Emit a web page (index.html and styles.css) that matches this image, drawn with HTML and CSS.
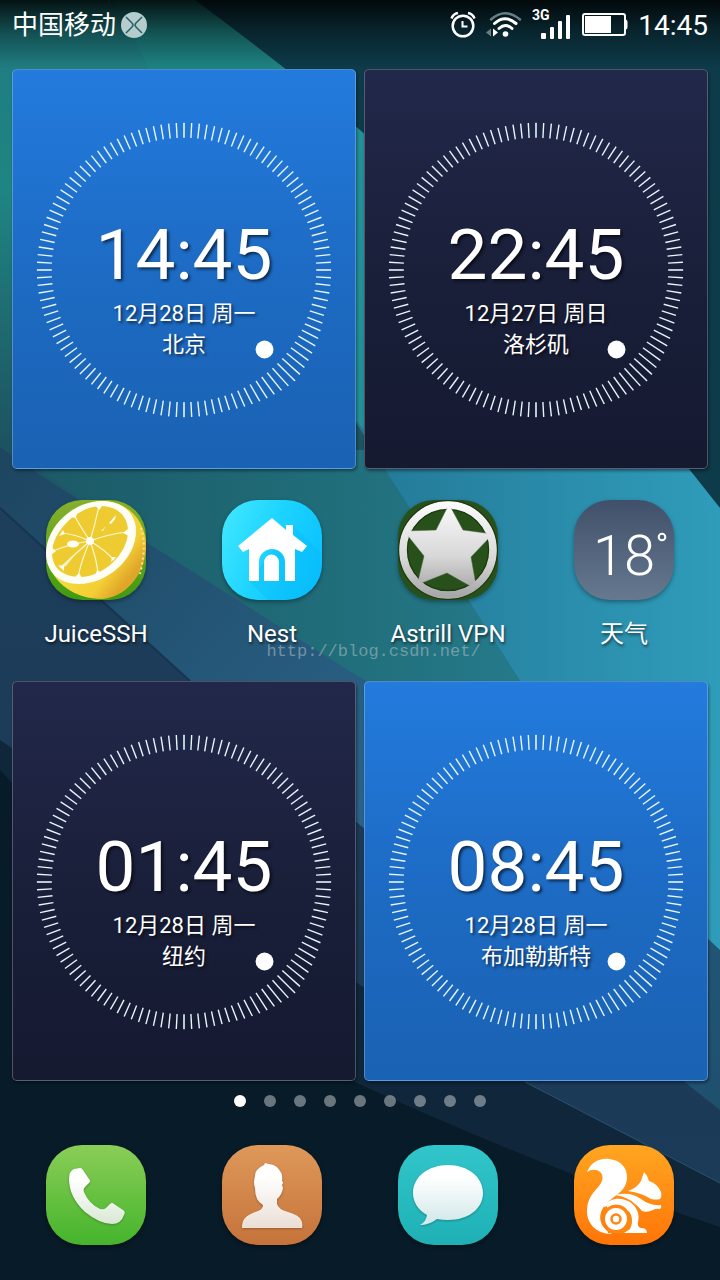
FILE: index.html
```html
<!DOCTYPE html>
<html lang="zh-CN">
<head>
    <meta charset="UTF-8">
    <meta name="viewport" content="width=device-width, initial-scale=1.0">
    <title>Home</title>
    <link rel="stylesheet" href="styles.css">
</head>
<body>
    <svg class="wallpaper" viewBox="0 0 720 1280" preserveAspectRatio="none" aria-hidden="true">
        <defs>
            <linearGradient id="wBase" x1="0" y1="0" x2="0" y2="1">
                <stop offset="0" stop-color="#1f7a80"/>
                <stop offset="0.15" stop-color="#1f8582"/>
                <stop offset="0.35" stop-color="#1d5260"/>
                <stop offset="0.45" stop-color="#22667a"/>
                <stop offset="1" stop-color="#22667a"/>
            </linearGradient>
            <linearGradient id="wMid" x1="0" y1="0" x2="1" y2="0">
                <stop offset="0" stop-color="#1c5866"/>
                <stop offset="0.5" stop-color="#1f6975"/>
                <stop offset="1" stop-color="#257a8a"/>
            </linearGradient>
            <linearGradient id="wBright" x1="0" y1="0" x2="1" y2="0">
                <stop offset="0" stop-color="#217391"/>
                <stop offset="1" stop-color="#2f9cba"/>
            </linearGradient>
            <linearGradient id="wBand" x1="0" y1="0" x2="1" y2="1">
                <stop offset="0" stop-color="#1d4560"/>
                <stop offset="0.5" stop-color="#2b658b"/>
                <stop offset="1" stop-color="#1b4a66"/>
            </linearGradient>
            <linearGradient id="wNavy" x1="0" y1="0" x2="0" y2="1">
                <stop offset="0" stop-color="#1d3f5c"/>
                <stop offset="0.4" stop-color="#1c3a57"/>
                <stop offset="1" stop-color="#1c3b58"/>
            </linearGradient>
            <linearGradient id="wShade" x1="0" y1="0" x2="0" y2="1">
                <stop offset="0" stop-color="#000" stop-opacity="0.85"/>
                <stop offset="0.5" stop-color="#000" stop-opacity="0.35"/>
                <stop offset="1" stop-color="#000" stop-opacity="0"/>
            </linearGradient>
        </defs>
        <rect width="720" height="1280" fill="url(#wBase)"/>
        <path d="M112 0Q135 40 150 70L420 520L720 600V0Z" fill="#1d8c88" opacity="0.45"/>
        <path d="M300 330L385 470L520 681L720 960V0H330Z" fill="url(#wBright)"/>
        <path d="M12 450H372L385 470L520 681V720H400Z" fill="url(#wMid)"/>
        <path d="M330 100L364 132V430L340 400Z" fill="#238f97"/>
        <path d="M195 0Q300 78 360 130Q550 290 720 508V0Z" fill="#0d3b49"/>
        <path d="M0 447L45 478L340 665L560 800L720 950V1280H0Z" fill="url(#wBand)"/>
        <path d="M0 508L190 681L360 825L720 1110V1280H0Z" fill="url(#wNavy)"/>
        <path d="M0 508L190 681" stroke="#16354e" stroke-width="2"/>
        <path d="M0 740L360 985L525 1082L720 1183V1280H0Z" fill="#10273b"/>
        <path d="M525 1082L720 1183" stroke="#2c506e" stroke-width="1"/>
        <path d="M0 770L240 1030L370 1089Q560 1175 720 1227V1280H0Z" fill="#081b28"/>
        <rect width="720" height="68" fill="url(#wShade)"/>
    </svg>

    <header class="status-bar">
        <div class="carrier">
            <span>中国移动</span>
            <svg width="26" height="26" viewBox="0 0 26 26" aria-hidden="true">
                <circle cx="13" cy="13" r="13" fill="#b5cdcd"/>
                <path d="M5 5L11 11Q13 13 11 15L5 21M21 5L15 11Q13 13 15 15L21 21" fill="none" stroke="#2b5f66" stroke-width="1.5"/>
            </svg>
        </div>
        <div class="indicators">
            <svg width="26" height="28" viewBox="0 0 26 28" fill="none" stroke="#fff" aria-hidden="true">
                <circle cx="13" cy="15" r="10.3" stroke-width="2.5"/>
                <path d="M12.500 10V15.500H17.500" stroke-width="2"/>
                <path d="M1.500 7.500Q3 3 8 2M24.500 7.500Q23 3 18 2" stroke-width="2.5"/>
            </svg>
            <svg width="36" height="28" viewBox="0 0 36 28" fill="none" stroke="#fff" stroke-linecap="round" aria-hidden="true">
                <path d="M5 8.500Q19 -4 34 8.500" stroke-width="2.500" stroke="#667f87"/>
                <path d="M8.500 12.500Q19 3 30 12.500" stroke-width="3"/>
                <path d="M13 17.500Q19.500 11.500 26 17.500" stroke-width="3"/>
                <circle cx="19.500" cy="23" r="2.800" fill="#fff" stroke="none"/>
                <path d="M0 21.500L5 17.500V25.500Z" fill="#667f87" stroke="none"/>
                <path d="M7 17.500L12 21.500L7 25.500Z" fill="#fff" stroke="none"/>
            </svg>
            <svg width="40" height="32" viewBox="0 0 40 32" fill="#fff" aria-hidden="true">
                <text class="network" x="0" y="11">3G</text>
                <rect x="9" y="24" width="5" height="6" rx="1"/>
                <rect x="18" y="18" width="4" height="12" rx="1"/>
                <rect x="26" y="12" width="4" height="18" rx="1"/>
                <rect x="34" y="6" width="4" height="24" rx="1"/>
            </svg>
            <svg width="46" height="24" viewBox="0 0 46 24" aria-hidden="true">
                <rect x="1" y="1" width="42" height="21" rx="2" fill="none" stroke="#fff" stroke-width="2"/>
                <rect x="3" y="3" width="26" height="17" fill="#fff"/>
                <path d="M43 6.500H44Q45.500 7 45.500 9V14Q45.500 16 44 16.500H43Z" fill="#fff"/>
            </svg>
            <time>14:45</time>
        </div>
    </header>

    <main>
        <section class="clocks">
            <article class="clock day">
                <svg class="dial" viewBox="0 0 344 400" aria-hidden="true"></svg>
                <div class="clock-text">
                    <time class="clock-time">14:45</time>
                    <p>12月28日 周一</p>
                    <p>北京</p>
                </div>
            </article>
            <article class="clock night">
                <svg class="dial" viewBox="0 0 344 400" aria-hidden="true"></svg>
                <div class="clock-text">
                    <time class="clock-time">22:45</time>
                    <p>12月27日 周日</p>
                    <p>洛杉矶</p>
                </div>
            </article>
        </section>

        <nav class="apps">
            <a class="app" href="#juicessh">
                <svg class="app-icon" viewBox="0 0 100 100" aria-hidden="true">
                    <defs>
                        <clipPath id="tile"><rect width="100" height="100" rx="36"/></clipPath>
                        <linearGradient id="leaf" x1="0" y1="0" x2="0" y2="1">
                            <stop offset="0" stop-color="#86b02c"/>
                            <stop offset="1" stop-color="#3f9a12"/>
                        </linearGradient>
                        <linearGradient id="rind" x1="0.4" y1="0.3" x2="0.9" y2="0.7">
                            <stop offset="0" stop-color="#f8e040"/>
                            <stop offset="0.7" stop-color="#f3ce35"/>
                            <stop offset="1" stop-color="#dfa62a"/>
                        </linearGradient>
                    </defs>
                    <g clip-path="url(#tile)">
                        <rect width="100" height="100" fill="url(#leaf)"/>
                        <path d="M1 58C2 28 30 1 58 1C82 2 98 20 100 42C102 72 80 98 56 99C30 99 6 84 1 58Z" fill="url(#rind)"/>
                        <path d="M0 53C0 27 27 1 56 1C77 1 90 14 90 31C90 59 61 84 33 84C13 84 0 72 0 53Z" fill="#fffef4"/>
                        <path d="M6 53C6 32 31 6 55 6C72 6 82 17 82 31C82 54 57 77 34 77C17 77 6 68 6 53Z" fill="#eecb31"/>
                        <path d="M44 41Q49 25 53 6M44 41Q62 34 82 32M44 41Q59 50 68 60M44 41Q51 60 52 74M44 41Q36 58 32 77M44 41Q28 55 14 68M44 41Q24 44 7 51M44 41Q29 34 15 33M44 41Q34 26 28 15" stroke="#fff8d2" stroke-width="1.200" fill="none"/>
                        <g fill="#fffef4">
                            <circle cx="44" cy="41" r="4"/>
                            <path d="M49 5L57 5L53 10ZM83 28L83 36L77 33ZM65 62L70 57L66 57ZM49 76L56 73L51 70ZM28 78L36 78L33 73ZM12 65L18 71L18 66ZM5 47L5 55L10 51ZM13 36L17 30L19 34ZM24 17L31 12L30 18Z"/>
                            <ellipse cx="27" cy="44" rx="6" ry="3.500"/>
                            <path d="M63 23L70 15L69 19L65 24Z"/>
                            <path d="M55 31L60 26L57 31ZM15 68L29 55L20 66Z" opacity="0.8"/>
                        </g>
                        <path d="M95 28Q101 45 94 74" fill="none" stroke="#f9e9a0" stroke-width="2" stroke-dasharray="2 3"/>
                    </g>
                </svg>
                <span>JuiceSSH</span>
            </a>
            <a class="app" href="#nest">
                <svg class="app-icon" viewBox="0 0 100 100" aria-hidden="true">
                    <defs>
                        <linearGradient id="sky" x1="0" y1="0.2" x2="1" y2="0.6">
                            <stop offset="0" stop-color="#3fe6ff"/>
                            <stop offset="0.5" stop-color="#1cd3ff"/>
                            <stop offset="1" stop-color="#0ac2ff"/>
                        </linearGradient>
                    </defs>
                    <g clip-path="url(#tile)">
                        <rect width="100" height="100" fill="url(#sky)"/>
                        <path d="M71 25L100 54V100H46L27 81Z" fill="#08b6f6" opacity="0.3"/>
                    </g>
                    <path d="M50 18L64 30V25H71V35L85 46L80 52L73 49V81H63V62A13 13 0 0 0 37 62V81H27V49L21 52L16 46Z" fill="#fff"/>
                    <path d="M42 81V62A7.500 7.500 0 0 1 57 62V81Z" fill="#fff"/>
                </svg>
                <span>Nest</span>
            </a>
            <a class="app" href="#astrill">
                <svg class="app-icon" viewBox="0 0 100 100" aria-hidden="true">
                    <defs>
                        <linearGradient id="steel" x1="0" y1="0" x2="0" y2="1">
                            <stop offset="0" stop-color="#fafafa"/>
                            <stop offset="0.6" stop-color="#d8d8d8"/>
                            <stop offset="1" stop-color="#a8a8a8"/>
                        </linearGradient>
                    </defs>
                    <rect width="100" height="100" rx="36" fill="#28501a"/>
                    <circle cx="50" cy="50" r="45" fill="none" stroke="#1a3a10" stroke-width="10"/>
                    <circle cx="50" cy="50" r="45" fill="none" stroke="url(#steel)" stroke-width="7.500"/>
                    <path d="M51 4L65 30L95 34L73 57L79 90L49 73L19 85L26 56L6 31L38 30Z" fill="url(#steel)" stroke="#4c6340" stroke-width="0.500"/>
                    <circle cx="50" cy="50" r="45" fill="none" stroke="url(#steel)" stroke-width="6.500"/>
                </svg>
                <span>Astrill VPN</span>
            </a>
            <a class="app" href="#weather">
                <svg class="app-icon" viewBox="0 0 100 100">
                    <defs>
                        <linearGradient id="dusk" x1="0" y1="0" x2="0" y2="1">
                            <stop offset="0" stop-color="#40506a"/>
                            <stop offset="1" stop-color="#66798f"/>
                        </linearGradient>
                    </defs>
                    <rect width="100" height="100" rx="36" fill="url(#dusk)"/>
                    <text class="temperature" x="19" y="75">18</text>
                    <circle cx="88" cy="37" r="3.300" fill="none" stroke="#fff" stroke-width="2"/>
                </svg>
                <span>天气</span>
            </a>
            <p class="site-mark">http://blog.csdn.net/</p>
        </nav>

        <section class="clocks">
            <article class="clock night">
                <svg class="dial" viewBox="0 0 344 400" aria-hidden="true"></svg>
                <div class="clock-text">
                    <time class="clock-time">01:45</time>
                    <p>12月28日 周一</p>
                    <p>纽约</p>
                </div>
            </article>
            <article class="clock day">
                <svg class="dial" viewBox="0 0 344 400" aria-hidden="true"></svg>
                <div class="clock-text">
                    <time class="clock-time">08:45</time>
                    <p>12月28日 周一</p>
                    <p>布加勒斯特</p>
                </div>
            </article>
        </section>
    </main>

    <div class="pages">
        <button class="page current" type="button" aria-label="1"></button>
        <button class="page" type="button" aria-label="2"></button>
        <button class="page" type="button" aria-label="3"></button>
        <button class="page" type="button" aria-label="4"></button>
        <button class="page" type="button" aria-label="5"></button>
        <button class="page" type="button" aria-label="6"></button>
        <button class="page" type="button" aria-label="7"></button>
        <button class="page" type="button" aria-label="8"></button>
        <button class="page" type="button" aria-label="9"></button>
    </div>

    <nav class="dock">
        <a class="app" href="#phone" aria-label="电话">
            <svg class="app-icon" viewBox="0 0 100 100">
                <defs>
                    <linearGradient id="green" x1="0" y1="0" x2="0" y2="1">
                        <stop offset="0" stop-color="#8ace57"/>
                        <stop offset="1" stop-color="#45b42c"/>
                    </linearGradient>
                    <linearGradient id="paper" x1="0" y1="0" x2="0" y2="1">
                        <stop offset="0.2" stop-color="#fff"/>
                        <stop offset="1" stop-color="#fff" stop-opacity="0.8"/>
                    </linearGradient>
                </defs>
                <rect width="100" height="100" rx="36" fill="url(#green)"/>
                <path class="glyph" d="M28 24L34 23Q36 23 37 25L43 34Q45 36 43 38L39 42Q37 44 38 47Q43 59 54 64Q58 65 60 63L64 59Q66 57 68 59L77 65Q80 67 78 70Q75 79 66 79Q54 79 39 67Q23 52 23 34Q23 26 28 24Z" fill="url(#paper)"/>
            </svg>
        </a>
        <a class="app" href="#contacts" aria-label="联系人">
            <svg class="app-icon" viewBox="0 0 100 100">
                <defs>
                    <linearGradient id="clay" x1="0" y1="0" x2="0" y2="1">
                        <stop offset="0" stop-color="#df985a"/>
                        <stop offset="1" stop-color="#c5733a"/>
                    </linearGradient>
                </defs>
                <rect width="100" height="100" rx="36" fill="url(#clay)"/>
                <path class="glyph" d="M42 20L43 18L47 19Q55 20 58 26Q61 29 60 36Q62 37 60 40L61 43Q60 50 55 54V59Q56 64 66 67Q77 70 79 75Q81 78 80 83H20Q20 76 23 73Q27 69 36 66Q41 64 41 60Q33 56 33 43Q31 38 33 31Q33 24 42 20Z" fill="url(#paper)"/>
            </svg>
        </a>
        <a class="app" href="#messages" aria-label="信息">
            <svg class="app-icon" viewBox="0 0 100 100">
                <defs>
                    <linearGradient id="teal" x1="0" y1="0" x2="0" y2="1">
                        <stop offset="0" stop-color="#31c6cb"/>
                        <stop offset="1" stop-color="#1eb0b4"/>
                    </linearGradient>
                </defs>
                <rect width="100" height="100" rx="36" fill="url(#teal)"/>
                <path class="glyph" d="M50 20C70 20 85 32 85 48C85 64 70 75 50 75Q45 75 39 74Q31 80 22 80Q28 77 29 70C20 65 15 57 15 48C15 32 30 20 50 20Z" fill="url(#paper)"/>
            </svg>
        </a>
        <a class="app" href="#browser" aria-label="UC">
            <svg class="app-icon" viewBox="0 0 100 100">
                <defs>
                    <linearGradient id="orange" x1="0" y1="0" x2="0" y2="1">
                        <stop offset="0" stop-color="#ffa621"/>
                        <stop offset="1" stop-color="#ff7507"/>
                    </linearGradient>
                </defs>
                <rect width="100" height="100" rx="36" fill="url(#orange)"/>
                <path d="M13 27C17 18 24 13 35 14C46 15 53 22 53 32C53 45 43 49 34 57C24 66 22 80 38 89C21 89 12 77 13 64C14 52 20 47 25 41C31 34 29 26 22 25Q17 24 13 27Z" fill="#fff"/>
                <path d="M54 46Q63 43 67 36L70 27Q74 31 75 36Q84 39 87 47Q88 52 86 54Q83 55 77 54Q68 48 54 46Z" fill="#fff"/>
                <path d="M41 50Q56 46 67 54Q76 61 87 60Q88 62 86 64Q82 63 79 65Q73 68 68 66Q65 62 61 59Q54 52 41 50Z" fill="#fff"/>
                <path d="M30 61C36 52 48 52 56 57C63 62 66 69 64 77Q63 82 67 83Q73 83 73 88H47Z" fill="#fff"/>
                <path d="M30 63A17 17 0 0 1 56 84L50 88H34Z" fill="#ff8610"/>
                <path d="M33 62A15 15 0 0 1 55 66" fill="none" stroke="#fff" stroke-width="1.500"/>
                <circle cx="42" cy="74" r="11" fill="#fff"/>
                <circle cx="42" cy="74" r="4.500" fill="none" stroke="#ff8610" stroke-width="2.500"/>
            </svg>
        </a>
    </nav>

    <script src="dial.js"></script>
</body>
</html>
```

FILE: styles.css
```css
* {
    box-sizing: border-box;
}

body {
    margin: 0;
    min-height: 100vh;
    position: relative;
    font-family: Roboto, "Noto Sans CJK SC", sans-serif;
    color: #fff;
    background-color: #081b28;
}

p {
    margin: 0;
}

.wallpaper {
    position: absolute;
    top: 0;
    left: 0;
    width: 100%;
    height: 100%;
    z-index: -1;
}

/* Status bar */
.status-bar {
    display: flex;
    justify-content: space-between;
    align-items: center;
    height: 50px;
    padding: 0 12px;
}

.carrier,
.indicators {
    display: flex;
    align-items: center;
}

.carrier {
    gap: 5px;
    font-size: 26px;
    line-height: 28px;
}

.indicators {
    gap: 10px;
    font-size: 28px;
}

.network {
    font-size: 14px;
    font-weight: 700;
}

/* World clocks */
main {
    padding-top: 19px;
}

.clocks {
    display: grid;
    grid-template-columns: 1fr 1fr;
    gap: 8px;
    padding: 0 12px;
}

.clock {
    display: grid;
    min-height: 400px;
    border: 1px solid rgba(255, 255, 255, 0.25);
    border-radius: 5px;
    box-shadow: 1px 2px 3px rgba(0, 0, 0, 0.4);
}

.day {
    background: linear-gradient(#237bdd, #1d6bc4 50%, #1a62b3);
}

.night {
    background: linear-gradient(#22284a, #1a1f3a 50%, #151a31);
}

.dial,
.clock-text {
    grid-area: 1 / 1;
}

.dial {
    width: 100%;
    height: 100%;
}

.clock-text {
    padding-top: 149px;
    text-align: center;
    font-size: 22px;
    line-height: 31px;
    text-shadow: 2px 2px 3px rgba(0, 0, 0, 0.6);
}

.clock-time {
    display: block;
    margin-bottom: 7px;
    font-size: 71px;
    line-height: 72px;
}

/* Apps */
.apps,
.dock {
    display: grid;
    grid-template-columns: repeat(4, 1fr);
    padding: 0 8px;
}

.apps {
    position: relative;
    padding-top: 31px;
    padding-bottom: 33px;
}

.app {
    display: flex;
    flex-direction: column;
    align-items: center;
    gap: 20px;
    font-size: 24px;
    line-height: 28px;
    color: #fff;
    text-decoration: none;
    text-shadow: 1px 2px 3px rgba(0, 0, 0, 0.6);
}

.app-icon {
    width: 100px;
    height: 100px;
    filter: drop-shadow(0 2px 2px rgba(0, 0, 0, 0.35));
}

.glyph {
    filter: drop-shadow(0 1px 1px rgba(0, 0, 0, 0.3));
}

.temperature {
    font-size: 56px;
    font-weight: 300;
    fill: #fff;
    text-shadow: none;
}

.site-mark {
    position: absolute;
    top: 173px;
    left: 37%;
    font-family: "Liberation Mono", monospace;
    font-size: 17px;
    line-height: 20px;
    color: rgba(190, 200, 200, 0.5);
}

/* Page dots */
.pages {
    display: flex;
    justify-content: center;
    gap: 18px;
    padding: 14px 0 38px;
}

.page {
    width: 12px;
    height: 12px;
    padding: 0;
    border: none;
    border-radius: 50%;
    background-color: rgba(255, 255, 255, 0.4);
}

.page.current {
    background-color: #fff;
}

.dock {
    padding-bottom: 35px;
}
```

FILE: dial.js
```js
// Draws the ring of 120 ticks; ticks near the dot grow outwards
var SVG = "http://www.w3.org/2000/svg";
var cx = 172, cy = 201;
var dotAngle = 135;

document.querySelectorAll(".dial").forEach(function(dial) {
    for (var a = 0; a < 360; a += 3) {
        var rad = a * Math.PI / 180;
        var grow = Math.max(0, 10 * (1 - Math.abs(a - dotAngle) / 27));
        var outer = 148 + grow;
        var tick = document.createElementNS(SVG, "line");
        tick.setAttribute("x1", cx + Math.sin(rad) * 133);
        tick.setAttribute("y1", cy - Math.cos(rad) * 133);
        tick.setAttribute("x2", cx + Math.sin(rad) * outer);
        tick.setAttribute("y2", cy - Math.cos(rad) * outer);
        tick.setAttribute("stroke", "#e6f6ff");
        tick.setAttribute("stroke-width", a % 90 === 0 ? 1.6 : 1.4);
        dial.appendChild(tick);
    }

    var dot = document.createElementNS(SVG, "circle");
    dot.setAttribute("cx", cx + 81);
    dot.setAttribute("cy", cy + 80);
    dot.setAttribute("r", 9);
    dot.setAttribute("fill", "#fff");
    dial.appendChild(dot);
});
```
